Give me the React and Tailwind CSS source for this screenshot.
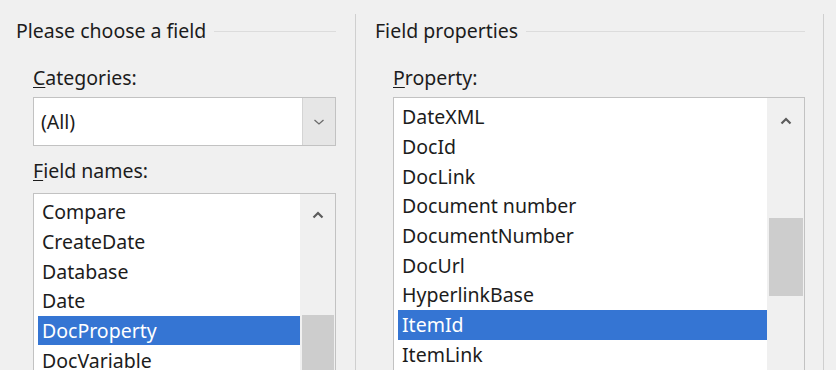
import React from 'react';

const FONT = { fontFamily: '"Noto Sans", "Open Sans", sans-serif' };

const fieldNames = ['Compare', 'CreateDate', 'Database', 'Date', 'DocProperty', 'DocVariable'];
const properties = [
  'DateXML',
  'DocId',
  'DocLink',
  'Document number',
  'DocumentNumber',
  'DocUrl',
  'HyperlinkBase',
  'ItemId',
  'ItemLink',
];

function UpArrow() {
  return (
    <svg width="12" height="8" viewBox="0 0 12 8" className="block">
      <path d="M1.5 6.5 L6 2 L10.5 6.5" fill="none" stroke="#5c5c5c" strokeWidth="2.2" />
    </svg>
  );
}

function DownChevron() {
  return (
    <svg width="12" height="8" viewBox="0 0 12 8" className="block">
      <path d="M1.5 2 L6 6 L10.5 2" fill="none" stroke="#6a6a6a" strokeWidth="1.3" />
    </svg>
  );
}

function GroupTitle({ children }) {
  return (
    <div className="flex items-center h-[34px] gap-[8px]">
      <span className="whitespace-nowrap">{children}</span>
      <div className="flex-1 h-px bg-[#dcdcdc] mt-[1px]" />
    </div>
  );
}

function ListBox({ items, selected, padTop, barWidth, thumbTop, thumbHeight, arrowTop }) {
  return (
    <div className="flex border border-[#c2c2c2] bg-white h-[400px] overflow-hidden">
      <div className="flex-1 pl-[4px]" style={{ paddingTop: padTop }}>
        {items.map((item) => (
          <div
            key={item}
            className={`h-[29.7px] flex items-center pl-[4px] whitespace-nowrap ${
              item === selected ? 'bg-[#3575d3] text-white' : ''
            }`}
          >
            {item}
          </div>
        ))}
      </div>
      <div className="bg-[#f0f0f0] flex flex-col items-center shrink-0" style={{ width: barWidth }}>
        <div style={{ marginTop: arrowTop }}>
          <UpArrow />
        </div>
        <div
          className="bg-[#cdcdcd] w-[calc(100%-3px)]"
          style={{ marginTop: thumbTop, height: thumbHeight }}
        />
      </div>
    </div>
  );
}

export default function App() {
  return (
    <div
      className="w-[836px] h-[370px] bg-[#f0f0f0] overflow-hidden flex text-[19.5px] text-[#1c1c1c]"
      style={FONT}
    >
      {/* left group */}
      <div className="w-[355px] shrink-0 pt-[14px] pl-[16px] pr-[19px]">
        <GroupTitle>Please choose a field</GroupTitle>
        <div className="ml-[17px]">
          <div className="mt-[15px] h-[30px] flex items-center">
            <span>
              <span className="underline underline-offset-2">C</span>ategories:
            </span>
          </div>
          <div className="mt-[4px] h-[49px] flex border border-[#c2c2c2] bg-white">
            <div className="flex-1 flex items-center pl-[7px]">(All)</div>
            <div className="w-[33px] bg-[#e6e6e6] border-l border-[#d4d4d4] flex items-center justify-center">
              <DownChevron />
            </div>
          </div>
          <div className="mt-[10px] h-[30px] flex items-center">
            <span>
              <span className="underline underline-offset-2">F</span>ield names:
            </span>
          </div>
          <div className="mt-[7px]">
            <ListBox
              items={fieldNames}
              selected="DocProperty"
              padTop={3}
              barWidth={35}
              arrowTop={17}
              thumbTop={96}
              thumbHeight={200}
            />
          </div>
        </div>
      </div>

      {/* divider */}
      <div className="w-px shrink-0 mt-[14px] bg-[#cfcfcf]" />

      {/* right group */}
      <div className="w-[467px] shrink-0 pt-[14px] pl-[19px] pr-[18px]">
        <GroupTitle>Field properties</GroupTitle>
        <div className="ml-[18px]">
          <div className="mt-[15px] h-[30px] flex items-center">
            <span>
              <span className="underline underline-offset-2">P</span>roperty:
            </span>
          </div>
          <div className="mt-[4px]">
            <ListBox
              items={properties}
              selected="ItemId"
              padTop={4}
              barWidth={37}
              arrowTop={19}
              thumbTop={93}
              thumbHeight={78}
            />
          </div>
        </div>
      </div>

      <div className="w-px shrink-0 mt-[14px] bg-[#cfcfcf]" />
      <div className="flex-1" />
    </div>
  );
}
